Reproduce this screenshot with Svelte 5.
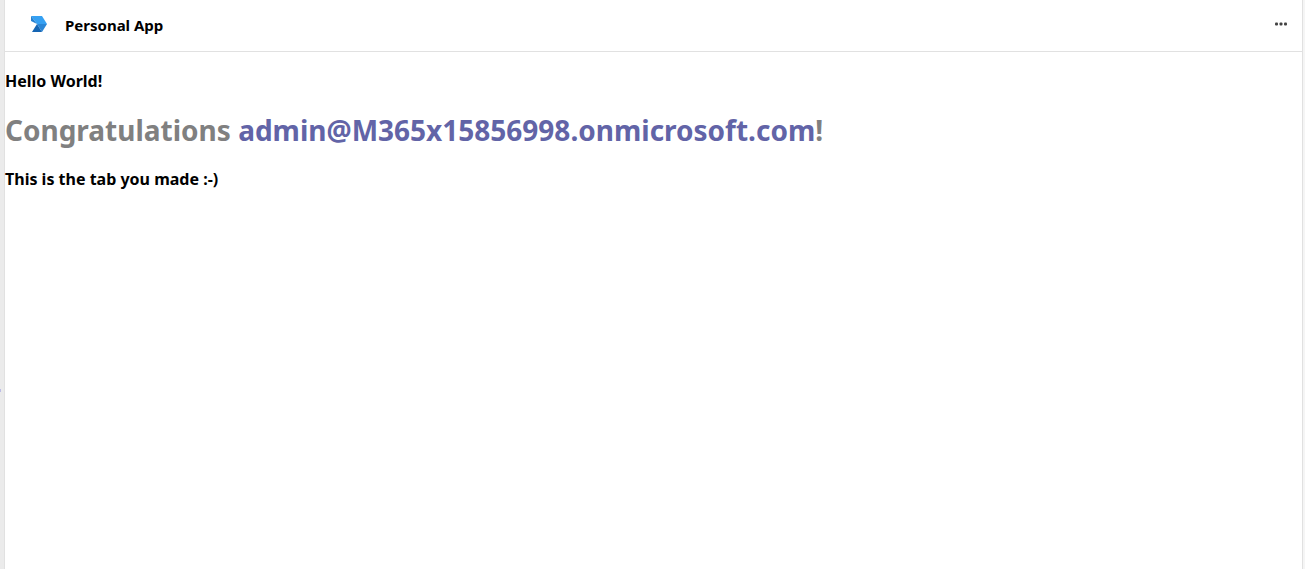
<script>
  const appName = 'Personal App';
  const user = 'admin@M365x15856998.onmicrosoft.com';
</script>

<div class="shell">
  <section class="app">
    <header>
      <svg class="logo" viewBox="0 0 16 16" aria-hidden="true">
        <path d="M0 0h11l5 8H6z" fill="#35a0f2" />
        <path d="M0 0l6 8L0 5z" fill="#2680d0" />
        <path d="M6 8h10l-5 8z" fill="#2a86d6" />
        <path d="M6 8l5 8H1z" fill="#1565b3" />
      </svg>
      <span class="name">{appName}</span>
      <button type="button" aria-label="More options">
        <svg viewBox="0 0 12 4" aria-hidden="true">
          <rect x="0" y="0.5" width="3" height="3" rx="1" />
          <rect x="4.5" y="0.5" width="3" height="3" rx="1" />
          <rect x="9" y="0.5" width="3" height="3" rx="1" />
        </svg>
      </button>
    </header>
    <main>
      <h3>Hello World!</h3>
      <h1>Congratulations <span>{user}</span>!</h1>
      <h3>This is the tab you made :-)</h3>
    </main>
  </section>
  <i class="marker"></i>
</div>

<style>
  :global(body) {
    margin: 0;
  }
  .shell {
    position: relative;
    box-sizing: border-box;
    min-height: 100vh;
    padding: 0 2px 0 4px;
    display: flex;
    background: linear-gradient(to right, #ebebeb 50%, #f5f5f5 50%);
    font-family: 'Segoe UI', 'Noto Sans', 'Open Sans', sans-serif;
    color: #000;
  }
  .app {
    flex: 1;
    min-width: 0;
    background: #fff;
    border-left: 1px solid #e1e1e1;
    border-right: 1px solid #e1e1e1;
  }
  header {
    display: flex;
    align-items: center;
    box-sizing: border-box;
    height: 52px;
    padding: 0 15px 3px 26px;
    border-bottom: 1px solid #e1e1e1;
  }
  .logo {
    width: 16px;
    height: 16px;
    margin-right: 18px;
  }
  .name {
    padding-top: 2px;
    font-size: 15px;
    line-height: 20px;
    font-weight: 700;
  }
  button {
    display: flex;
    margin-left: auto;
    padding: 8px 0;
    border: 0;
    background: none;
  }
  button svg {
    width: 12px;
    height: 4px;
    fill: #424242;
  }
  h1,
  h3 {
    margin: 0;
    font-weight: 700;
    overflow-wrap: anywhere;
  }
  main {
    display: flex;
    flex-direction: column;
    gap: 16px;
    padding-top: 18px;
  }
  h3 {
    font-size: 16px;
    line-height: 22px;
  }
  h1 {
    font-size: 28px;
    line-height: 44px;
    color: #808080;
  }
  h1 span {
    color: #6264a7;
  }
  .marker {
    position: absolute;
    left: 0;
    top: 389px;
    width: 1px;
    height: 3px;
    background: #bdbde6;
  }
</style>
